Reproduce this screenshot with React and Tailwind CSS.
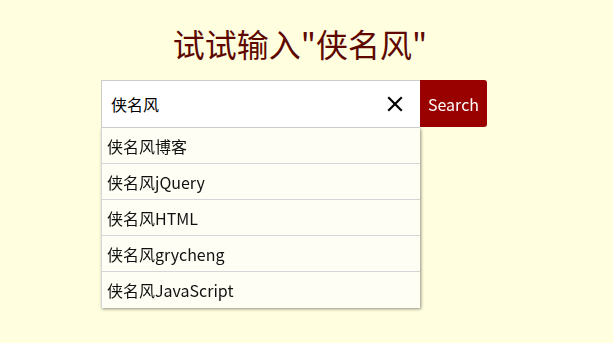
import { useState } from "react";

const suggestions = ["侠名风博客", "侠名风jQuery", "侠名风HTML", "侠名风grycheng", "侠名风JavaScript"];

const App = () => {
  const [query, setQuery] = useState("侠名风");

  return (
    <div
      className="min-h-screen w-full bg-[#ffffe0] pt-[21px]"
      style={{ fontFamily: '"Noto Sans CJK SC", "Noto Sans", sans-serif' }}
    >
      <h1 className="w-[600px] text-center text-[32px] leading-[44px] text-[#5e0800]">
        试试输入"侠名风"
      </h1>
      <div className="ml-[101px] mt-[15px] w-[386px]">
        <div className="flex h-[48px]">
          <div className="flex w-[319px] items-center border border-r-0 border-[#cccccc] bg-white">
            <input
              autoFocus
              value={query}
              onChange={e => setQuery(e.target.value)}
              className="w-full flex-1 bg-transparent pl-[9px] text-[16px] text-black caret-black outline-none"
            />
            <button
              className="mr-[15px] flex h-[20px] w-[20px] items-center justify-center"
              onClick={() => setQuery("")}
            >
              <svg width="16" height="16" viewBox="0 0 16 16">
                <path d="M2 2L14 14M14 2L2 14" stroke="#000" strokeWidth="2.2" strokeLinecap="square" />
              </svg>
            </button>
          </div>
          <button className="h-[47px] w-[67px] rounded-r-[3px] bg-[#990000] text-[16px] text-white">
            Search
          </button>
        </div>
        {query && (
          <ul className="w-[319px] bg-[#fefef4] shadow-[1px_1px_3px_rgba(0,0,0,0.45)]">
            {suggestions.map(s => (
              <li
                key={s}
                className="flex h-[36px] items-center border-b border-l border-[#d6d6d6] pl-[5px] text-[16px] text-[#111] last:border-b-0"
              >
                {s}
              </li>
            ))}
          </ul>
        )}
      </div>
    </div>
  );
};

export default App;
